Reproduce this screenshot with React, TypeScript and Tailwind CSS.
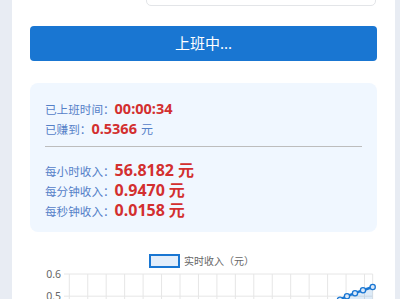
import React from "react";

const font = { fontFamily: '"Noto Sans", "Noto Sans CJK SC", sans-serif' };

function Row({ label, value, unit, big }: { label: string; value: string; unit?: string; big?: boolean }) {
  return (
    <div className="flex items-baseline h-[20px] leading-[20px]">
      <span className="text-[11.6px] text-[#5580c8]">{label}</span>
      <span className={`${big ? "text-[16px]" : "text-[14.5px]"} font-bold text-[#d32f2f]`}>{value}</span>
      {unit && (
        <span className={big ? "text-[16px] font-bold text-[#d32f2f] ml-[4px]" : "text-[12px] text-[#5580c8] ml-[4px]"}>{unit}</span>
      )}
    </div>
  );
}

function Chart() {
  const o = 8;
  const vlines: number[] = [];
  for (let i = 0; i < 17; i++) vlines.push(39.3 + 18.45 * i);
  const pts: [number, number][] = [
    [310, 30 + o - 4.3],
    [317, 26.5 + o - 4.3],
    [325, 23.5 + o - 4.3],
    [333, 20.5 + o - 4.3],
    [342.7, 17.3 + o - 4.3],
  ];
  const linePath = `M 305 ${33 + o - 4.3} ` + pts.map((p) => `L ${p[0]} ${p[1]}`).join(" ");
  const fillPath = linePath + " L 342.7 60 L 305 60 Z";
  const y6 = o;
  const y5 = o + 22.2;
  return (
    <svg width="347" height="60" className="block overflow-visible">
      {vlines.map((x, i) => (
        <line key={i} x1={x} y1={y6} x2={x} y2={60} stroke="#e6e6e6" strokeWidth={1} />
      ))}
      <line x1={342.7} y1={y6} x2={342.7} y2={60} stroke="#e6e6e6" strokeWidth={1} />
      <line x1={34} y1={y6} x2={342.7} y2={y6} stroke="#e6e6e6" strokeWidth={1} />
      <line x1={34} y1={y5} x2={342.7} y2={y5} stroke="#e6e6e6" strokeWidth={1} />
      <text x={31} y={y6 + 3.7} textAnchor="end" fontSize="10.5" fill="#666" style={font}>0.6</text>
      <text x={31} y={y5 + 3.7} textAnchor="end" fontSize="10.5" fill="#666" style={font}>0.5</text>
      <path d={fillPath} fill="#1976d2" fillOpacity={0.15} />
      <path d={linePath} fill="none" stroke="#1976d2" strokeWidth={2.5} />
      {pts.map((p, i) => (
        <circle key={i} cx={p[0]} cy={p[1]} r={2.6} fill="#dbe8f8" stroke="#1976d2" strokeWidth={1.3} />
      ))}
    </svg>
  );
}

export default function App() {
  return (
    <div className="w-[400px] h-[299px] overflow-hidden bg-[#e8ecf3]" style={font}>
      <div className="ml-[12px] w-[383px] h-[360px] bg-white px-[18px] mt-[-30px]">
        <div className="flex justify-end">
          <div className="w-[230px] h-[36px] border border-[#e3e5e8] rounded-[5px] bg-white mr-[1px]" />
        </div>
        <button className="mt-[20px] w-full h-[35px] rounded-[4px] bg-[#1976d2] text-white text-[15px] flex items-center justify-center">
          上班中...
        </button>
        <div className="mt-[22px] rounded-[8px] bg-[#f0f7ff] px-[15px] pt-[15px] pb-[12px]">
          <Row label="已上班时间：" value="00:00:34" />
          <Row label="已赚到：" value="0.5366" unit="元" />
          <div className="h-px bg-[#bdbdbd] mt-[8px] mb-[13px]" />
          <Row label="每小时收入：" value="56.8182" unit="元" big />
          <Row label="每分钟收入：" value="0.9470" unit="元" big />
          <Row label="每秒钟收入：" value="0.0158" unit="元" big />
        </div>
        <div className="mt-[22px] flex items-center justify-center gap-[4px] h-[14px] pr-[4px]">
          <div className="w-[31px] h-[14px] border-2 border-[#1976d2] bg-[#e3eefb]" />
          <span className="text-[10px] text-[#666] leading-none">实时收入（元）</span>
        </div>
        <div className="mt-[-2px]">
          <Chart />
        </div>
      </div>
    </div>
  );
}
